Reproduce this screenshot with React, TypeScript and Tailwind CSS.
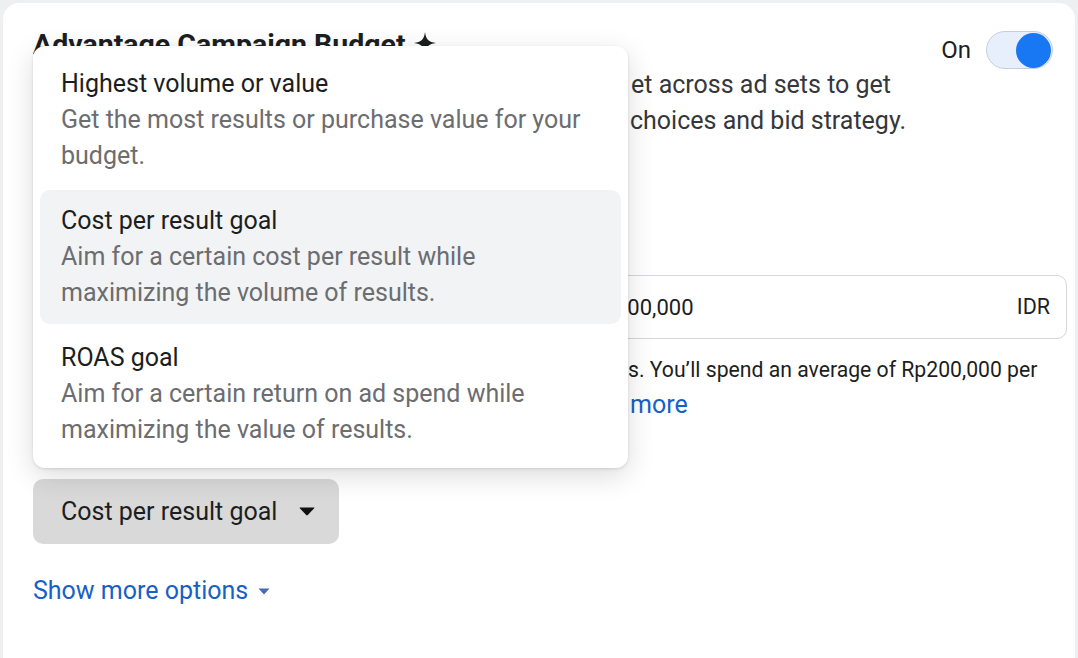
import React from "react";

const items = [
  {
    title: "Highest volume or value",
    desc: ["Get the most results or purchase value for your", "budget."],
    active: false,
  },
  {
    title: "Cost per result goal",
    desc: ["Aim for a certain cost per result while", "maximizing the volume of results."],
    active: true,
  },
  {
    title: "ROAS goal",
    desc: ["Aim for a certain return on ad spend while", "maximizing the value of results."],
    active: false,
  },
];

function Line({ hidden, shown, w }: { hidden: React.ReactNode; shown: React.ReactNode; w: string }) {
  return (
    <div className="flex whitespace-nowrap">
      <span className={`${w} shrink-0 overflow-hidden`}>{hidden}</span>
      <span>{shown}</span>
    </div>
  );
}

export default function App() {
  return (
    <div className="h-[658px] overflow-hidden bg-[#eeeff1] pl-[3px] pr-[3px] pt-[3px] font-[Roboto,sans-serif] text-[25px] text-[#1c1e21]">
      <div className="relative h-[700px] rounded-t-[16px] bg-white pl-[30px] pr-[8px] pt-[25px]">
        {/* header */}
        <div className="flex h-[39px] items-start justify-between">
          <div className="flex items-center gap-[8px] text-[28.5px] font-bold leading-[34px] text-[#1c1e21]">
            <span>Advantage Campaign Budget</span>
            <svg width="22" height="22" viewBox="0 0 24 24" className="mt-[-4px]">
              <path d="M12 0 C13 8 16 11 24 12 C16 13 13 16 12 24 C11 16 8 13 0 12 C8 11 11 8 12 0 Z" fill="#1c1e21" />
            </svg>
          </div>
          <div className="mr-[14px] mt-[3px] flex h-[38px] items-center gap-[15px]">
            <span className="text-[24px] leading-[36px] text-[#1c1e21]">On</span>
            <div className="flex h-[38px] w-[67px] items-center justify-end rounded-full border border-[#c5cfdc] bg-[#e8effc] pr-[1px]">
              <div className="h-[35px] w-[35px] rounded-full bg-[#1877f2]" />
            </div>
          </div>
        </div>

        {/* description */}
        <div className="leading-[36px] text-[#35373b]">
          <Line w="w-[598px]" hidden="Advantage campaign budget will distribute your budg" shown="et across ad sets to get" />
          <Line w="w-[597px]" hidden="more results based on your performance goal " shown="choices and bid strategy." />
        </div>

        {/* budget label (hidden under menu) */}
        <div className="mt-[94px] h-[36px] font-bold leading-[36px]">Budget</div>

        {/* input row */}
        <div className="mt-[6px] flex gap-[12px]">
          <div className="flex h-[64px] w-[545px] items-center rounded-[10px] border border-[#ccd0d5] px-[16px]">
            Daily budget
          </div>
          <div className="flex h-[64px] flex-1 items-center justify-between rounded-[10px] border border-[#d3d6db] pl-[24px] pr-[16px]">
            <span className="text-[22px]">200,000</span>
            <span className="text-[21.5px]">IDR</span>
          </div>
        </div>

        {/* helper */}
        <div className="mt-[13px] leading-[35px] text-[#1c1e21]">
          <div className="flex whitespace-nowrap text-[21.2px]">
            <span className="w-[595px] shrink-0 overflow-hidden">Actual amount spent daily may vary by day</span>
            <span>s. You’ll spend an average of Rp200,000 per</span>
          </div>
          <Line
            w="w-[597px]"
            hidden="day over the course of a week. Learn "
            shown={<span className="text-[#1760c9]">more</span>}
          />
        </div>

        {/* bid strategy label */}
        <div className="mt-[8px] h-[36px] font-bold leading-[36px]">Bid strategy</div>

        {/* button */}
        <div className="mt-[13px] flex">
          <div className="flex h-[65px] items-center gap-[22px] rounded-[10px] bg-[#d9d9d9] pl-[28px] pr-[24px]">
            <span className="leading-[36px]">Cost per result goal</span>
            <svg width="16" height="9" viewBox="0 0 16 9">
              <path d="M1 0.5 H15 Q15.8 0.5 15.2 1.3 L8.8 8 Q8 8.8 7.2 8 L0.8 1.3 Q0.2 0.5 1 0.5 Z" fill="#111" />
            </svg>
          </div>
        </div>

        {/* show more */}
        <div className="mt-[29px] flex items-center gap-[10px] leading-[36px] text-[#1760c9]">
          <span>Show more options</span>
          <svg width="12" height="7" viewBox="0 0 12 7">
            <path d="M0.5 0.5 H11.5 L6 6.5 Z" fill="#4a69b4" />
          </svg>
        </div>

        {/* dropdown menu */}
        <div className="absolute left-[30px] top-[43px] w-[595px] rounded-[12px] bg-white p-[7px] shadow-[0_1px_3px_rgba(0,0,0,0.12),0_8px_28px_rgba(0,0,0,0.14)]">
          <div className="flex flex-col gap-[3px]">
            {items.map((it) => (
              <div
                key={it.title}
                className={`rounded-[10px] pb-[13px] pl-[21px] pr-[16px] pt-[13px] leading-[36px] ${it.active ? "bg-[#f2f3f5]" : ""}`}
              >
                <div className="text-[#1c1e21]">{it.title}</div>
                {it.desc.map((d) => (
                  <div key={d} className="text-[#6b6d70]">
                    {d}
                  </div>
                ))}
              </div>
            ))}
          </div>
        </div>
      </div>
    </div>
  );
}
